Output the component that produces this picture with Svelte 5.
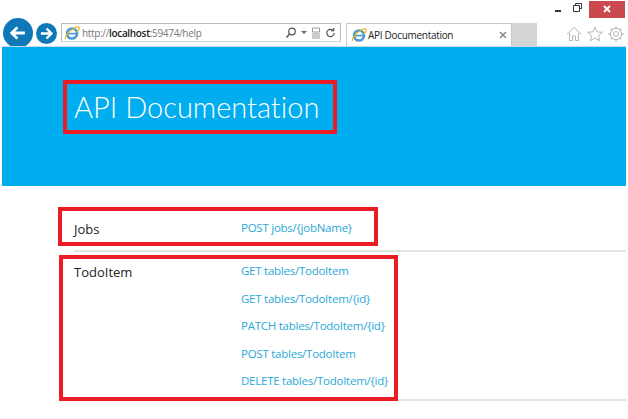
<script lang="ts">
  const groups = [
    { name: "Jobs", links: ["POST jobs/{jobName}"] },
    {
      name: "TodoItem",
      links: [
        "GET tables/TodoItem",
        "GET tables/TodoItem/{id}",
        "PATCH tables/TodoItem/{id}",
        "POST tables/TodoItem",
        "DELETE tables/TodoItem/{id}",
      ],
    },
  ];
</script>

{#snippet ieLogo()}
  <svg class="ie" viewBox="0 0 16 16" width="16" height="16">
    <circle cx="8" cy="8.5" r="5" fill="none" stroke="#4a9bd8" stroke-width="2.6" />
    <path d="M4 8.6h8" stroke="#4a9bd8" stroke-width="1.6" />
    <path d="M1.5 14c-1-2 3-8 9-11 2-1 4-1.500 4.500-.5.500 1-.5 3-2 4.500" fill="none" stroke="#eeb422" stroke-width="1.300" />
  </svg>
{/snippet}

<div class="page">
  <div class="chrome">
    <div class="winbtns">
      <span class="min"></span>
      <svg class="restore" viewBox="0 0 9 9" width="9" height="9">
        <path d="M2.500 2V.5h6v5H7M.5 2.500h6v6h-6z" fill="none" stroke="#333" stroke-width="1" />
      </svg>
      <span class="close">
        <svg viewBox="0 0 8 8" width="8" height="8">
          <path d="M1 1l6 6M7 1L1 7" stroke="#fff" stroke-width="1.800" />
        </svg>
      </span>
    </div>
    <div class="toolbar">
      <span class="nav back">
        <svg viewBox="0 0 32 32" width="20" height="20">
          <path d="M27 16H7M15 7l-9 9 9 9" fill="none" stroke="#fff" stroke-width="4.500" />
        </svg>
      </span>
      <span class="nav fwd">
        <svg viewBox="0 0 24 24" width="15" height="15">
          <path d="M3 12h17M12 4l8 8-8 8" fill="none" stroke="#fff" stroke-width="3.800" />
        </svg>
      </span>
      <div class="address">
        {@render ieLogo()}
        <span class="url">http://<b>localhost</b>:59474/help</span>
        <svg class="glyph search" viewBox="0 0 12 12" width="12" height="12">
          <circle cx="7" cy="4.500" r="3.300" fill="none" stroke="#555" stroke-width="1.200" />
          <path d="M4.600 7L1.500 10.500" stroke="#555" stroke-width="1.500" />
        </svg>
        <span class="caret"></span>
        <svg class="glyph" viewBox="0 0 10 12" width="10" height="12">
          <path d="M1.500 1h7v4h-7zM1 7h8M1 9h8M1 11h8" fill="none" stroke="#999" stroke-width="1" />
        </svg>
        <svg class="glyph" viewBox="0 0 12 12" width="11" height="12">
          <path d="M10 6a4 4 0 1 1-1.300-3M9.500 .5v3h-3" fill="none" stroke="#555" stroke-width="1.300" />
        </svg>
      </div>
      <div class="tab">
        {@render ieLogo()}
        <span class="tab-title">API Documentation</span>
        <svg class="tab-x" viewBox="0 0 8 8" width="8" height="8">
          <path d="M1 1l6 6M7 1L1 7" stroke="#888" stroke-width="1.500" />
        </svg>
      </div>
      <div class="newtab"></div>
      <div class="tools">
        <svg viewBox="0 0 16 16" width="16" height="16">
          <path d="M1 8l7-6.500L15 8M3.500 7v7.500H6.500V10h3v4.500h3V7" fill="none" stroke="#b5b5b5" stroke-width="1" />
        </svg>
        <svg viewBox="0 0 16 16" width="16" height="16">
          <path d="M8 1l2.100 4.800 5.200.5-3.900 3.400 1.200 5.100L8 12.100l-4.600 2.700 1.200-5.100L.7 6.300l5.200-.5z" fill="none" stroke="#b5b5b5" stroke-width="1" />
        </svg>
        <svg viewBox="0 0 16 16" width="16" height="16">
          <circle cx="8" cy="8" r="2.500" fill="none" stroke="#b5b5b5" stroke-width="1" />
          <circle cx="8" cy="8" r="5.600" fill="none" stroke="#b5b5b5" stroke-width="1" />
          <path d="M8 .5v2.500M8 13v2.500M.5 8H3M13 8h2.500M2.700 2.700l1.700 1.700M11.600 11.600l1.700 1.700M13.300 2.700l-1.700 1.700M4.400 11.600l-1.700 1.700" stroke="#b5b5b5" stroke-width="1.300" />
        </svg>
      </div>
    </div>
  </div>

  <header class="hero">
    <h1>API Documentation</h1>
    <span class="mark hero-mark"></span>
  </header>

  <main class="list">
    {#each groups as group}
      <section class="group">
        <h2>{group.name}</h2>
        <ul>
          {#each group.links as link}
            <li><a href="#top">{link}</a></li>
          {/each}
        </ul>
      </section>
    {/each}
    <span class="mark jobs-mark"></span>
    <span class="mark todo-mark"></span>
  </main>
</div>

<style>
  :global(body) { background: #fff; }

  .page {
    width: 628px;
    height: 419px;
    overflow: hidden;
    position: relative;
    font-family: "Open Sans", "Noto Sans", sans-serif;
  }

  .chrome { height: 47px; display: flex; flex-direction: column; }

  .winbtns {
    height: 15px;
    display: flex;
    justify-content: flex-end;
    align-items: center;
    padding: 0 3px 0 0;
  }
  .min { width: 6px; height: 2px; background: #333; margin: 6px 12px 0 0; }
  .restore { margin-right: 7px; }
  .close {
    width: 36px;
    height: 17px;
    margin-top: 3px;
    background: #c9494c;
    display: flex;
    align-items: center;
    justify-content: center;
  }

  .toolbar { display: flex; align-items: flex-start; padding: 8px 0 0 3px; }

  .nav {
    border-radius: 50%;
    background: #0f79b8;
    display: flex;
    align-items: center;
    justify-content: center;
    flex: none;
  }
  .back { width: 30px; height: 30px; margin-top: -5px; }
  .fwd { width: 21px; height: 21px; margin: 0 4px 0 3px; }

  .address {
    width: 280px;
    height: 19px;
    border: 1px solid #b9b9b9;
    border-bottom-color: #d4d4d4;
    box-sizing: border-box;
    display: flex;
    align-items: center;
    padding: 0 4px 0 2px;
    font-size: 10px;
    letter-spacing: -0.33px;
    color: #777;
  }
  .ie { flex: none; }
  .url { margin-left: 2px; flex: 1; white-space: nowrap; }
  .url b { color: #222; font-weight: 600; }
  .glyph { flex: none; margin-left: 4px; }
  .search { margin-left: 0; }
  .caret {
    width: 0;
    height: 0;
    margin-left: 4px;
    border: 3px solid transparent;
    border-top-color: #666;
    border-bottom-width: 0;
  }

  .tab {
    width: 166px;
    height: 23px;
    margin: 0 0 0 5px;
    box-sizing: border-box;
    border: 1px solid #c9c9c9;
    border-bottom: none;
    display: flex;
    align-items: center;
    padding: 0 4px 0 4px;
    font-size: 10px;
    letter-spacing: -0.3px;
    color: #222;
  }
  .tab-title { margin-left: 1px; flex: 1; white-space: nowrap; }
  .newtab { width: 25px; height: 23px; background: #d6d6d6; }

  .tools {
    display: flex;
    gap: 5px;
    margin: 3px 0 0 29px;
  }

  .hero {
    height: 139px;
    margin: 0 2px;
    background: #00adef;
    box-shadow: 0 -1px 0 #c4dbe6;
    position: relative;
    box-sizing: border-box;
    padding: 40px 0 0 72px;
  }
  h1 {
    margin: 0;
    font-family: Lato, "Open Sans", sans-serif;
    font-size: 29px;
    font-variant-ligatures: none;
    line-height: 40px;
    font-weight: 300;
    color: #fff;
    white-space: nowrap;
  }

  .list { padding: 21px 2px 0 74px; }
  .group {
    display: flex;
    border-bottom: 2px solid #e4e4e4;
    box-sizing: border-box;
  }
  .group:first-of-type { height: 45px; margin-bottom: 3px; padding-top: 13px; }
  .group:nth-of-type(2) { height: 146px; }
  h2 {
    margin: 0;
    width: 167px;
    font-size: 13px;
    line-height: 18px;
    font-weight: 400;
    color: #222;
    flex: none;
  }
  .group:nth-of-type(2) h2 { margin-top: 8px; }
  ul { margin: 0; padding: 0; list-style: none; }
  li {
    height: 27.500px;
    font-size: 11.500px;
    letter-spacing: -0.25px;
    line-height: 16px;
    white-space: nowrap;
  }
  a { color: #2aa9d6; text-decoration: none; }
  .group:nth-of-type(2) ul { padding-top: 8px; }

  .mark {
    position: absolute;
    box-sizing: border-box;
    border: 4px solid #ec1c24;
  }
  .hero-mark { left: 61px; top: 33px; width: 274px; height: 54px; }
  .jobs-mark { left: 58px; top: 207px; width: 320px; height: 39px; }
  .todo-mark { left: 59px; top: 255px; width: 339px; height: 146px; }
</style>
